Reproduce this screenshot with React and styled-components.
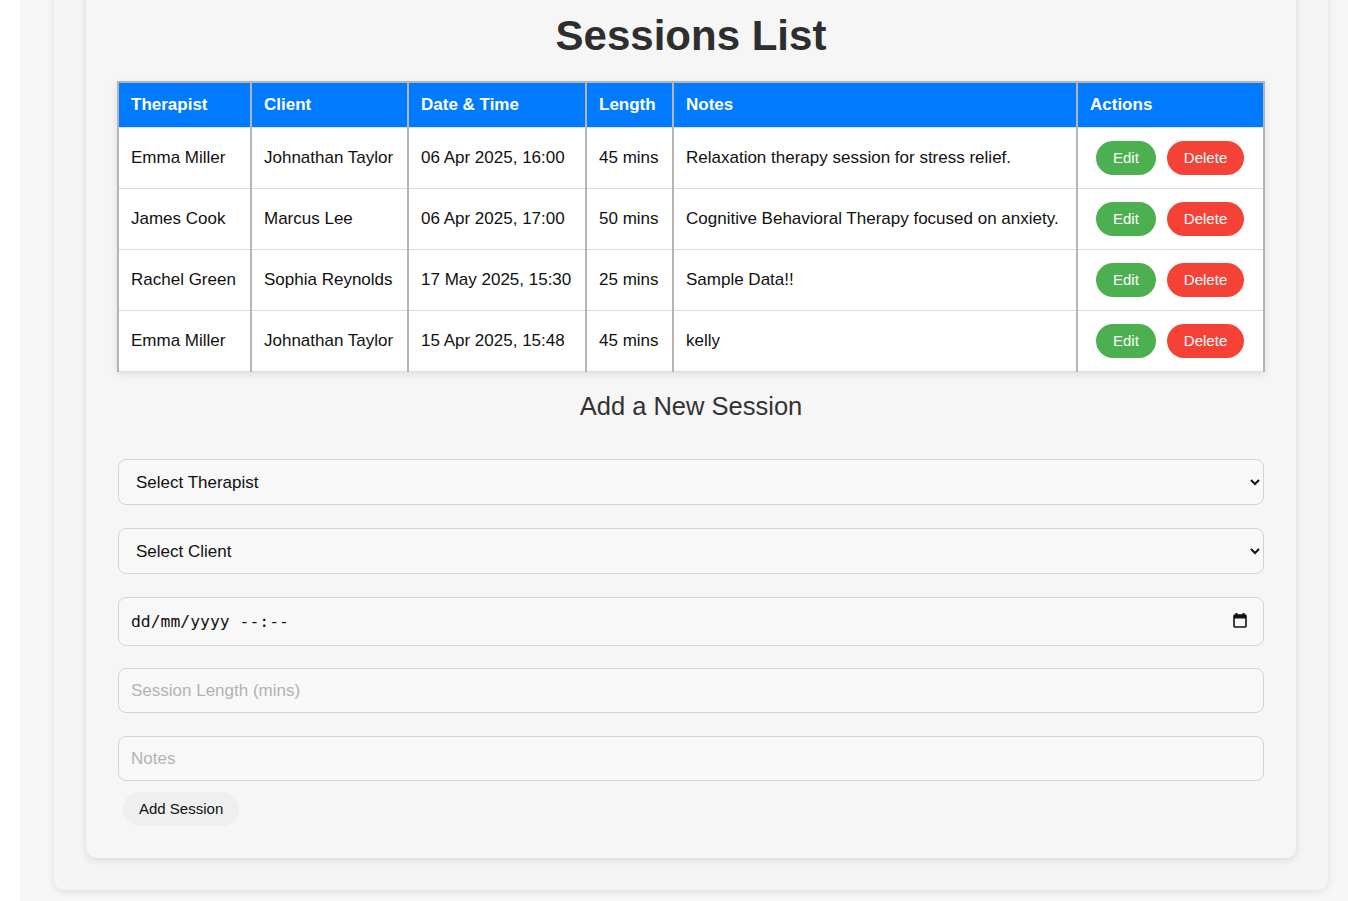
import React from 'react';
import styled, { createGlobalStyle } from 'styled-components';

const GlobalStyle = createGlobalStyle`
  *, *::before, *::after { box-sizing: border-box; }
  body {
    margin: 0;
    background: #ffffff;
    font-family: "Liberation Sans", Arial, sans-serif;
    color: #111;
  }
`;

const Page = styled.div`
  margin: -50px 0 0 20px;
  padding: 0 20px 11px 34px;
  background: #f7f7f7;
  min-height: calc(100vh + 50px);
`;

const OuterCard = styled.div`
  background: #f5f5f5;
  border-radius: 10px;
  padding: 32px;
  box-shadow: 0 2px 8px rgba(0, 0, 0, 0.1);
`;

const InnerCard = styled.div`
  background: #f6f6f6;
  border-radius: 10px;
  padding: 30px 31px 32px;
  box-shadow: 0 2px 8px rgba(0, 0, 0, 0.12);
`;

const Title = styled.h1`
  margin: 0 0 21px 0;
  text-align: center;
  font-size: 42px;
  font-weight: 700;
  color: #2e2e2e;
`;

const Table = styled.table`
  width: 100%;
  border-collapse: collapse;
  table-layout: fixed;
  background: #fff;
  border-top: 2px solid #b5b5b5;
  border-left: 2px solid #b5b5b5;
  border-right: 2px solid #b5b5b5;
  box-shadow: 0 2px 8px rgba(0, 0, 0, 0.1);
`;

const Th = styled.th`
  width: ${(p) => (p.$w ? `${p.$w}px` : 'auto')};
  background: #007bff;
  color: #fff;
  text-align: left;
  font-size: 17px;
  font-weight: 700;
  line-height: 20px;
  padding: 12px 12px 12px;
  border-left: 2px solid #b5b5b5;
  border-right: 2px solid #b5b5b5;
  border-bottom: 1px solid #dde3ea;
`;

const Td = styled.td`
  font-size: 17px;
  line-height: 20px;
  padding: 13px 12px;
  vertical-align: middle;
  border-left: 2px solid #b5b5b5;
  border-right: 2px solid #b5b5b5;
  border-bottom: 1px solid #dddddd;
  white-space: nowrap;
`;

const Actions = styled.div`
  display: flex;
  gap: 11px;
  margin-left: 6px;
`;

const PillButton = styled.button`
  border: none;
  border-radius: 20px;
  padding: 8px 17px;
  font-family: "Liberation Sans", Arial, sans-serif;
  font-size: 15px;
  line-height: 18px;
  color: #fff;
  background: ${(p) => (p.$variant === 'delete' ? '#f44336' : '#4caf50')};
  cursor: pointer;
`;

const SubTitle = styled.h2`
  margin: 20px 0 38px;
  text-align: center;
  font-size: 25.5px;
  font-weight: 400;
  color: #333;
`;

const Form = styled.form`
  display: flex;
  flex-direction: column;
  padding: 0 1px;
`;

const Select = styled.select`
  width: 100%;
  height: 46px;
  margin-bottom: 23px;
  padding: 12px 13px;
  font-family: "Liberation Sans", Arial, sans-serif;
  font-size: 17px;
  color: #111;
  background: #f8f8f8;
  border: 1px solid #d4d4d4;
  border-radius: 8px;
`;

const FieldWrap = styled.div`
  position: relative;
  margin-bottom: ${(p) => p.$gap}px;
`;

const Input = styled.input`
  width: 100%;
  height: ${(p) => (p.$mono ? '49px' : '45px')};
  padding: 12px;
  font-family: ${(p) =>
    p.$mono ? '"DejaVu Sans Mono", "Liberation Mono", monospace' : '"Liberation Sans", Arial, sans-serif'};
  font-size: ${(p) => (p.$mono ? '16.4px' : '17px')};
  color: #111;
  background: #f8f8f8;
  border: 1px solid #d4d4d4;
  border-radius: 8px;
  outline: none;

  &::placeholder {
    color: ${(p) => (p.$mono ? '#111' : '#b3b3b3')};
  }
`;

const CalendarIcon = styled.svg`
  position: absolute;
  right: 17px;
  top: 16px;
  pointer-events: none;
`;

const AddButton = styled.button`
  align-self: flex-start;
  margin-left: 5px;
  border: none;
  border-radius: 17px;
  padding: 8px 16px;
  font-family: "Liberation Sans", Arial, sans-serif;
  font-size: 15px;
  line-height: 18px;
  color: #111;
  background: #efefef;
  cursor: pointer;
`;

const sessions = [
  { therapist: 'Emma Miller', client: 'Johnathan Taylor', date: '06 Apr 2025, 16:00', length: '45 mins', notes: 'Relaxation therapy session for stress relief.' },
  { therapist: 'James Cook', client: 'Marcus Lee', date: '06 Apr 2025, 17:00', length: '50 mins', notes: 'Cognitive Behavioral Therapy focused on anxiety.' },
  { therapist: 'Rachel Green', client: 'Sophia Reynolds', date: '17 May 2025, 15:30', length: '25 mins', notes: 'Sample Data!!' },
  { therapist: 'Emma Miller', client: 'Johnathan Taylor', date: '15 Apr 2025, 15:48', length: '45 mins', notes: 'kelly' },
];

const App = () => {
  return (
    <>
      <GlobalStyle />
      <Page>
        <OuterCard>
          <InnerCard>
            <Title>Sessions List</Title>
            <Table>
              <thead>
                <tr>
                  <Th $w={133}>Therapist</Th>
                  <Th $w={157}>Client</Th>
                  <Th $w={178}>Date &amp; Time</Th>
                  <Th $w={87}>Length</Th>
                  <Th>Notes</Th>
                  <Th $w={187}>Actions</Th>
                </tr>
              </thead>
              <tbody>
                {sessions.map((s, i) => (
                  <tr key={i}>
                    <Td>{s.therapist}</Td>
                    <Td>{s.client}</Td>
                    <Td>{s.date}</Td>
                    <Td>{s.length}</Td>
                    <Td>{s.notes}</Td>
                    <Td>
                      <Actions>
                        <PillButton type="button">Edit</PillButton>
                        <PillButton type="button" $variant="delete">Delete</PillButton>
                      </Actions>
                    </Td>
                  </tr>
                ))}
              </tbody>
            </Table>

            <SubTitle>Add a New Session</SubTitle>
            <Form onSubmit={(e) => e.preventDefault()}>
              <Select defaultValue="">
                <option value="">Select Therapist</option>
              </Select>
              <Select defaultValue="">
                <option value="">Select Client</option>
              </Select>
              <FieldWrap $gap={22}>
                <Input $mono type="text" placeholder="dd/mm/yyyy --:--" />
                <CalendarIcon width="14" height="15" viewBox="0 0 14 15">
                  <rect x="2.5" y="0" width="2" height="3" fill="#111" />
                  <rect x="9.5" y="0" width="2" height="3" fill="#111" />
                  <rect x="1" y="2" width="12" height="12" rx="1" fill="none" stroke="#111" strokeWidth="1.6" />
                  <rect x="1" y="2" width="12" height="3.5" fill="#111" />
                </CalendarIcon>
              </FieldWrap>
              <FieldWrap $gap={23}>
                <Input type="number" placeholder="Session Length (mins)" />
              </FieldWrap>
              <FieldWrap $gap={11}>
                <Input type="text" placeholder="Notes" />
              </FieldWrap>
              <AddButton type="submit">Add Session</AddButton>
            </Form>
          </InnerCard>
        </OuterCard>
      </Page>
    </>
  );
};

export default App;
